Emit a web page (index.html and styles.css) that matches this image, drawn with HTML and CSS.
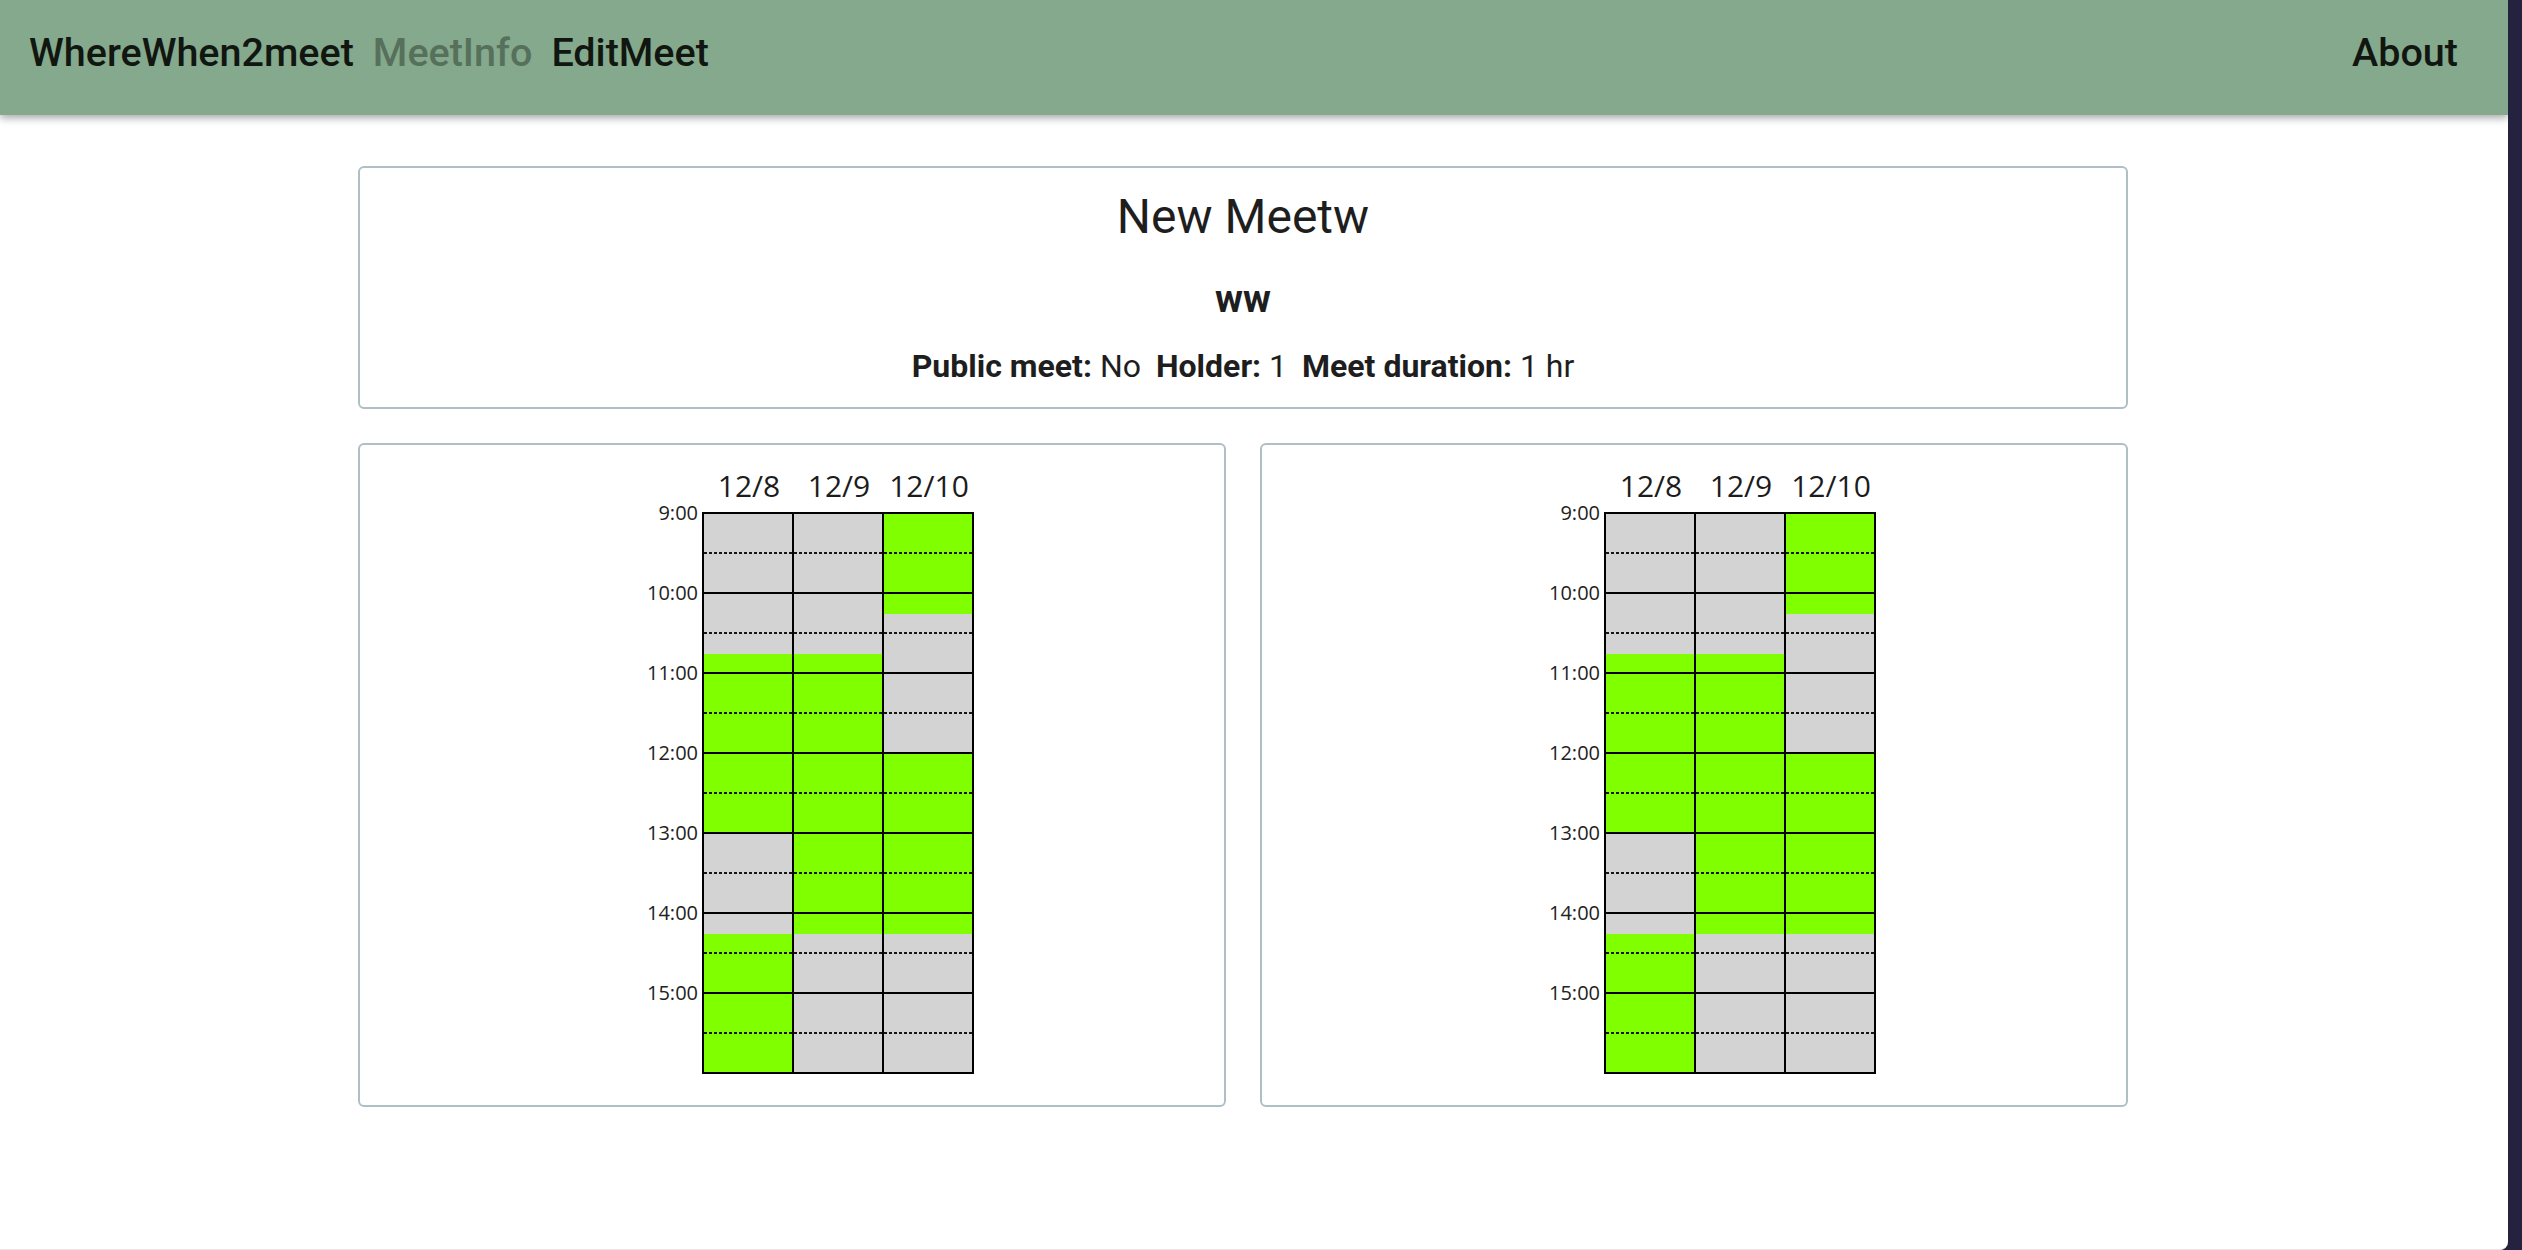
FILE: index.html
```html
<!DOCTYPE html>
<html lang="en">
<head>
<meta charset="utf-8">
<title>WhereWhen2meet - MeetInfo</title>
<link rel="stylesheet" href="styles.css">
</head>
<body>
<div class="window">
  <nav class="navbar">
    <div class="nav-left">
      <a class="nav-link brand" href="#">WhereWhen2meet</a>
      <a class="nav-link active" href="#">MeetInfo</a>
      <a class="nav-link" href="#">EditMeet</a>
    </div>
    <a class="nav-link about" href="#">About</a>
  </nav>

  <main class="container">
    <section class="card info-card">
      <h1 class="meet-title">New Meetw</h1>
      <h3 class="meet-desc">ww</h3>
      <p class="meta">
        <span class="meta-item"><b>Public meet:</b> No</span><span class="meta-item"><b>Holder:</b> 1</span><span class="meta-item"><b>Meet duration:</b> 1 hr</span>
      </p>
    </section>

    <div class="row">
      <section class="card schedule-card">
        <div class="schedule">
          <div class="times">
            <div class="time">9:00</div><div class="time">10:00</div><div class="time">11:00</div><div class="time">12:00</div><div class="time">13:00</div><div class="time">14:00</div><div class="time">15:00</div>
          </div>
          <div class="days">
            <div class="day-heads"><div class="day-head">12/8</div><div class="day-head">12/9</div><div class="day-head">12/10</div></div>
            <div class="grid">
              <div class="col">
                <div class="h"><i class="q"></i><i class="q"></i><i class="q"></i><i class="q"></i></div>
                <div class="h"><i class="q"></i><i class="q"></i><i class="q"></i><i class="q g"></i></div>
                <div class="h"><i class="q g"></i><i class="q g"></i><i class="q g"></i><i class="q g"></i></div>
                <div class="h"><i class="q g"></i><i class="q g"></i><i class="q g"></i><i class="q g"></i></div>
                <div class="h"><i class="q"></i><i class="q"></i><i class="q"></i><i class="q"></i></div>
                <div class="h"><i class="q"></i><i class="q g"></i><i class="q g"></i><i class="q g"></i></div>
                <div class="h"><i class="q g"></i><i class="q g"></i><i class="q g"></i><i class="q g"></i></div>
              </div>
              <div class="col">
                <div class="h"><i class="q"></i><i class="q"></i><i class="q"></i><i class="q"></i></div>
                <div class="h"><i class="q"></i><i class="q"></i><i class="q"></i><i class="q g"></i></div>
                <div class="h"><i class="q g"></i><i class="q g"></i><i class="q g"></i><i class="q g"></i></div>
                <div class="h"><i class="q g"></i><i class="q g"></i><i class="q g"></i><i class="q g"></i></div>
                <div class="h"><i class="q g"></i><i class="q g"></i><i class="q g"></i><i class="q g"></i></div>
                <div class="h"><i class="q g"></i><i class="q"></i><i class="q"></i><i class="q"></i></div>
                <div class="h"><i class="q"></i><i class="q"></i><i class="q"></i><i class="q"></i></div>
              </div>
              <div class="col">
                <div class="h"><i class="q g"></i><i class="q g"></i><i class="q g"></i><i class="q g"></i></div>
                <div class="h"><i class="q g"></i><i class="q"></i><i class="q"></i><i class="q"></i></div>
                <div class="h"><i class="q"></i><i class="q"></i><i class="q"></i><i class="q"></i></div>
                <div class="h"><i class="q g"></i><i class="q g"></i><i class="q g"></i><i class="q g"></i></div>
                <div class="h"><i class="q g"></i><i class="q g"></i><i class="q g"></i><i class="q g"></i></div>
                <div class="h"><i class="q g"></i><i class="q"></i><i class="q"></i><i class="q"></i></div>
                <div class="h"><i class="q"></i><i class="q"></i><i class="q"></i><i class="q"></i></div>
              </div>
            </div>
          </div>
        </div>
      </section>

      <section class="card schedule-card">
        <div class="schedule">
          <div class="times">
            <div class="time">9:00</div><div class="time">10:00</div><div class="time">11:00</div><div class="time">12:00</div><div class="time">13:00</div><div class="time">14:00</div><div class="time">15:00</div>
          </div>
          <div class="days">
            <div class="day-heads"><div class="day-head">12/8</div><div class="day-head">12/9</div><div class="day-head">12/10</div></div>
            <div class="grid">
              <div class="col">
                <div class="h"><i class="q"></i><i class="q"></i><i class="q"></i><i class="q"></i></div>
                <div class="h"><i class="q"></i><i class="q"></i><i class="q"></i><i class="q g"></i></div>
                <div class="h"><i class="q g"></i><i class="q g"></i><i class="q g"></i><i class="q g"></i></div>
                <div class="h"><i class="q g"></i><i class="q g"></i><i class="q g"></i><i class="q g"></i></div>
                <div class="h"><i class="q"></i><i class="q"></i><i class="q"></i><i class="q"></i></div>
                <div class="h"><i class="q"></i><i class="q g"></i><i class="q g"></i><i class="q g"></i></div>
                <div class="h"><i class="q g"></i><i class="q g"></i><i class="q g"></i><i class="q g"></i></div>
              </div>
              <div class="col">
                <div class="h"><i class="q"></i><i class="q"></i><i class="q"></i><i class="q"></i></div>
                <div class="h"><i class="q"></i><i class="q"></i><i class="q"></i><i class="q g"></i></div>
                <div class="h"><i class="q g"></i><i class="q g"></i><i class="q g"></i><i class="q g"></i></div>
                <div class="h"><i class="q g"></i><i class="q g"></i><i class="q g"></i><i class="q g"></i></div>
                <div class="h"><i class="q g"></i><i class="q g"></i><i class="q g"></i><i class="q g"></i></div>
                <div class="h"><i class="q g"></i><i class="q"></i><i class="q"></i><i class="q"></i></div>
                <div class="h"><i class="q"></i><i class="q"></i><i class="q"></i><i class="q"></i></div>
              </div>
              <div class="col">
                <div class="h"><i class="q g"></i><i class="q g"></i><i class="q g"></i><i class="q g"></i></div>
                <div class="h"><i class="q g"></i><i class="q"></i><i class="q"></i><i class="q"></i></div>
                <div class="h"><i class="q"></i><i class="q"></i><i class="q"></i><i class="q"></i></div>
                <div class="h"><i class="q g"></i><i class="q g"></i><i class="q g"></i><i class="q g"></i></div>
                <div class="h"><i class="q g"></i><i class="q g"></i><i class="q g"></i><i class="q g"></i></div>
                <div class="h"><i class="q g"></i><i class="q"></i><i class="q"></i><i class="q"></i></div>
                <div class="h"><i class="q"></i><i class="q"></i><i class="q"></i><i class="q"></i></div>
              </div>
            </div>
          </div>
        </div>
      </section>
    </div>
  </main>
</div>
</body>
</html>
```

FILE: styles.css
```css
* { box-sizing: border-box; }

html, body {
  margin: 0;
  padding: 0;
}

body {
  background: #25223f;
  font-family: Roboto, "Liberation Sans", sans-serif;
  color: #212529;
  width: 2522px;
  height: 1250px;
  overflow: hidden;
}

.window {
  width: 2508px;
  height: 1250px;
  background: #ffffff;
  border-bottom: 1px solid #e9e9ea;
  border-bottom-right-radius: 8px;
  overflow: hidden;
}

/* ---------- navbar ---------- */
.navbar {
  height: 115px;
  background: #84a98c;
  display: flex;
  justify-content: space-between;
  align-items: flex-start;
  padding: 30px 50px 0 29px;
  box-shadow: 0 3px 8px rgba(0, 0, 0, 0.35);
  position: relative;
  z-index: 1;
}

.nav-left {
  display: flex;
  gap: 19px;
}

.nav-link {
  font-family: Roboto, "Liberation Sans", sans-serif;
  font-size: 39.5px;
  font-weight: 500;
  line-height: 1.172;
  color: #111611;
  text-decoration: none;
}

.nav-link.active {
  color: #56705b;
}

/* ---------- layout ---------- */
.container {
  width: 1770px;
  margin: 51px 0 0 358px;
}

.card {
  background: #fff;
  border: 2px solid #b0bec6;
  border-radius: 6px;
}

.row {
  display: flex;
  gap: 34px;
  margin-top: 34px;
}

/* ---------- info card ---------- */
.info-card {
  height: 243px;
  padding-top: 20px;
  text-align: center;
  color: #1e1e1e;
}

.meet-title {
  margin: 0;
  font-size: 48px;
  font-weight: 400;
  line-height: 1.2;
}

.meet-desc {
  margin: 31px 0 0;
  font-size: 38px;
  font-weight: 700;
  line-height: 1.2;
}

.meta {
  margin: 20px 0 0;
  font-size: 32px;
  line-height: 1.5;
  display: flex;
  justify-content: center;
  gap: 15px;
}

.meta b {
  font-weight: 700;
}

/* ---------- schedule cards ---------- */
.schedule-card {
  flex: 1 1 0;
  height: 664px;
  padding-top: 23px;
}

.schedule {
  display: flex;
  justify-content: center;
  align-items: flex-start;
}

.times {
  width: 92px;
  padding-top: 5px;
  padding-right: 4px;
  display: flex;
  flex-direction: column;
}

.time {
  height: 80px;
  line-height: 80px;
  text-align: right;
  font-family: "Open Sans", sans-serif;
  font-size: 20px;
  color: #222;
}

.days {
  display: flex;
  flex-direction: column;
}

.day-heads {
  display: flex;
  padding-left: 2px;
  height: 36px;
  margin-bottom: 8px;
}

.day-head {
  width: 90px;
  text-align: center;
  font-family: "Open Sans", sans-serif;
  font-size: 30px;
  line-height: 36px;
  color: #1c1c1c;
}

.grid {
  display: flex;
  border-top: 2px solid #000;
  border-left: 2px solid #000;
}

.col {
  width: 90px;
  border-right: 2px solid #000;
  display: flex;
  flex-direction: column;
}

.h {
  height: 80px;
  display: flex;
  flex-direction: column;
}

.q {
  display: block;
  height: 20px;
  background-color: #d3d3d3;
}

.q.g {
  background-color: #80ff00;
}

.q:nth-child(2) {
  background-image: linear-gradient(to right, #161616 3px, transparent 3px);
  background-size: 5px 2px;
  background-position: 0 100%;
  background-repeat: repeat-x;
}

.q:nth-child(4) {
  border-bottom: 2px solid #000;
}
```
